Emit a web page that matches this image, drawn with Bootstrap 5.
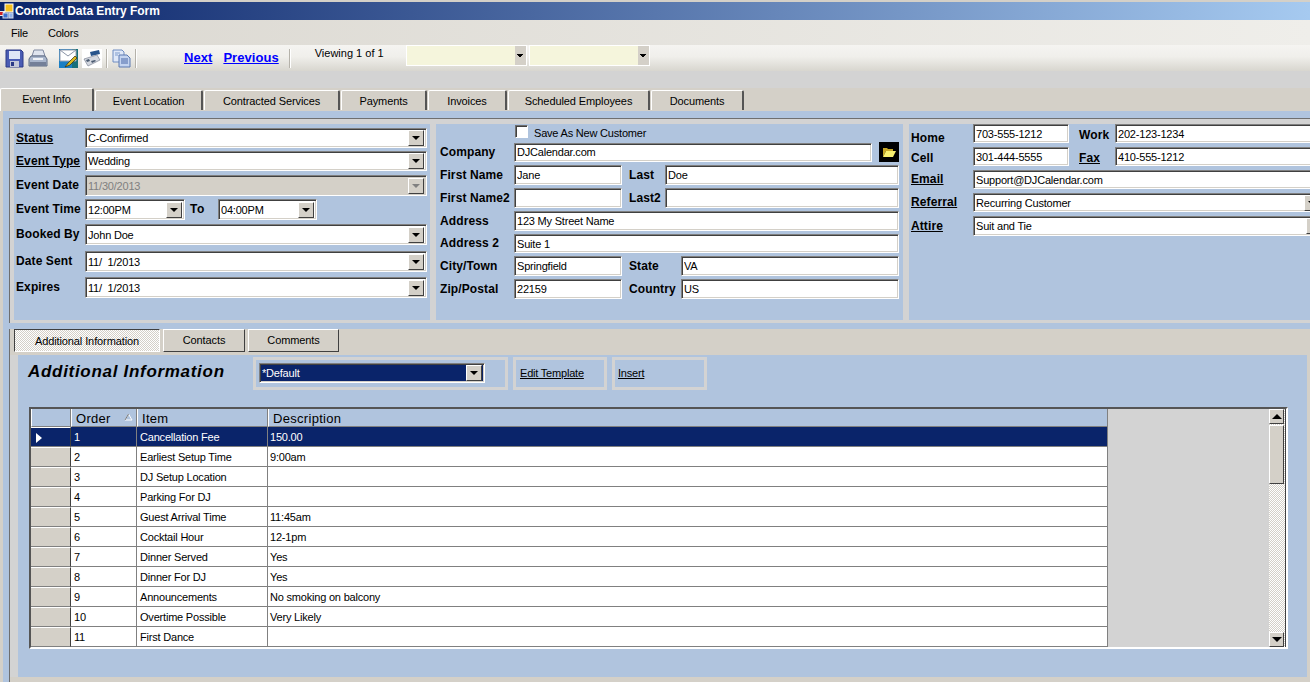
<!DOCTYPE html>
<html lang="en">
<head>
    <meta charset="UTF-8">
    <title>Contract Data Entry Form</title>
    <link href="https://cdn.jsdelivr.net/npm/bootstrap@5.3.0/dist/css/bootstrap.min.css" rel="stylesheet">
    <style>
        html, body { height: 682px; overflow: hidden; }
        body { width: 1310px; background: #d4d0c8; color: #000; font: 11px/13px "Liberation Sans", Arial, sans-serif; letter-spacing: -.2px; }

        /* window chrome */
        .titlebar { height: 20px; border-top: 2px solid #d4d0c8; background: linear-gradient(90deg, #0a246a, #a6caf0); color: #fff; font-weight: 700; font-size: 12px; letter-spacing: -.05px; }
        .menubar { height: 25px; background: linear-gradient(90deg, #dbd8d1, #efeeea); padding: 2px 0 0 11px; gap: 20px; }
        .menubar .nav-link { padding: 0; color: #000; font-size: 11px; }
        .toolbar { height: 26px; background: linear-gradient(180deg, #f5f4f1, #f0efeb 45%, #d8d6cf); padding-left: 5px; }
        .toolbar svg { flex-shrink: 0; }
        .tsep { width: 2px; height: 19px; border-left: 1px solid #b5b2aa; border-right: 1px solid #fff; flex-shrink: 0; }
        .toolbar a { color: #00f; font: 700 13px/15px "Liberation Sans", Arial, sans-serif; letter-spacing: .05px; margin-top: -1px; }
        .viewing { margin: -9px 24px 0 24px; width: 67px; white-space: nowrap; letter-spacing: 0; }
        .ml-4 { margin-left: 4px; } .ml-47 { margin-left: 47px; } .ml-10 { margin-left: 10px; } .ml-11 { margin-left: 11px; }
        .tb-combos { gap: 2px; }
        .tb-combo { width: 121px; height: 21px; background: #f5f5dc; border: 1px solid #fff; display: flex; justify-content: flex-end; }
        .tb-combo::after { content: ""; width: 11px; height: 19px; background: linear-gradient(#000, #000) center 8px / 6px 1px no-repeat, linear-gradient(#000, #000) center 9px / 4px 1px no-repeat, linear-gradient(#000, #000) center 10px / 2px 1px no-repeat, #d4d0c8; }
        .band { height: 17px; background: #d3d3d3; }

        /* top tabs */
        .tabs { height: 23px; background: #d4d0c8; flex-wrap: nowrap; }
        .tabs .nav-link { height: 20px; margin: 2px 1px 0 0; padding: 4px 0 0; text-align: center; color: #000; font-size: 11px; letter-spacing: -.1px; background: #d4d0c8; border: 0; border-top: 1px solid #fff; border-left: 1px solid #fff; border-right: 2px solid #555; border-radius: 2px 2px 0 0; }
        .tabs .nav-link.active { height: 23px; margin-top: 0; padding-top: 4px; width: 94px; }
        .tabs li:nth-child(2) .nav-link { width: 108px; }
        .tabs li:nth-child(3) .nav-link { width: 136px; }
        .tabs li:nth-child(4) .nav-link { width: 86px; }
        .tabs li:nth-child(5) .nav-link { width: 79px; }
        .tabs li:nth-child(6) .nav-link { width: 142px; }
        .tabs li:nth-child(7) .nav-link { width: 93px; }

        .tab-page { height: 571px; background: #b0c4de; border-left: 3px solid #d4d0c8; padding: 7px 0 0 6px; }
        .top-sec { background: #d3d3d3; border-top: 1px solid #6f6f6f; border-left: 1px solid #6f6f6f; padding: 5px 0 3px 4px; gap: 6px; }
        .pane { height: 196px; background: #b0c4de; flex-shrink: 0; overflow: hidden; }
        .pane-l { width: 416px; padding-left: 2px; }
        .pane-m { width: 467px; padding-left: 4px; }
        .pane-r { width: 401px; padding-left: 2px; }

        /* fields */
        .f-row { display: flex; align-items: center; flex-shrink: 0; }
        .t1 { margin-top: 1px; } .t2 { margin-top: 2px; } .t3 { margin-top: 3px; } .t4 { margin-top: 4px; } .t5 { margin-top: 5px; } .t6 { margin-top: 6px; }
        .lbl { font-weight: 700; font-size: 12px; letter-spacing: .1px; white-space: nowrap; flex-shrink: 0; margin: 0; }
        .pane-l .lbl { width: 69px; }
        .pane-m .lbl { width: 74px; }
        .pane-r .lbl { width: 62px; }
        .lbl.u { text-decoration: underline; }
        .lbl.low { margin-top: 5px; margin-bottom: -5px; }
        .lbl.low-2 { margin-top: 2px; margin-bottom: -2px; }
        .pane-m .lbl.s { width: 36px; margin-left: 7px; }
        .pane-m .lbl.w { width: 52px; margin-left: 7px; }
        .pane-r .lbl.s { width: 36px; margin-left: 10px; }
        .pane-l .lbl.to { width: 28px; margin-left: 5px; letter-spacing: .6px; }

        .sunk { height: 20px; background: #fff; border: 1px solid; border-color: #808080 #fff #fff #808080; box-shadow: inset 1px 1px #404040, inset -1px -1px #d4d0c8; flex-shrink: 0; }
        .sunk.h19 { height: 19px; }
        .sunk.h21 { height: 21px; }
        input.form-control.sunk { padding: 0 0 0 2px; border-radius: 0; font-size: 11px; letter-spacing: -.2px; color: #000; min-height: 0; }
        input.form-control.sunk:focus { outline: 0; }
        .combo { display: flex; padding: 2px 2px 2px 2px; align-items: center; }
        .combo input.form-control { border: 0; background: transparent; padding: 0; font-size: 11px; letter-spacing: -.2px; line-height: 13px; height: 15px; min-width: 0; flex: 1; border-radius: 0; color: #000; }
        .combo .btn { width: 16px; height: 16px; padding: 0; flex-shrink: 0; background: #d4d0c8; border: 1px solid; border-color: #fff #404040 #404040 #fff; border-radius: 0; display: flex; align-items: center; justify-content: center; }
        .combo .btn::after { content: ""; border-top: 4px solid #000; border-left: 4px solid transparent; border-right: 4px solid transparent; }
        .combo.off { background: #d4d0c8; }
        .combo.off input.form-control { color: #808080; }
        .combo.off .btn::after { border-top-color: #808080; }
        .w-342 { width: 342px; } .w-100p { width: 100px; } .w-99 { width: 99px; }
        .w-358 { width: 358px; } .w-108 { width: 108px; } .w-234 { width: 234px; } .w-385 { width: 385px; } .w-218 { width: 218px; }
        .w-96 { width: 96px; } .w-210 { width: 210px; } .w-352 { width: 352px; } .w-350 { width: 350px; }
        .check { margin-left: 74px; height: 13px; }
        .check span { padding-top: 3px; }
        .check .form-check-input { width: 13px; height: 13px; margin: 0 6px 0 1px; border-radius: 0; border: 1px solid; border-color: #6f6f6f #fff #fff #6f6f6f; background-color: #fff; box-shadow: inset 1px 1px #404040; float: none; }
        .folder { width: 20px; height: 20px; padding: 0; margin-left: 7px; background: #000; border: 0; border-radius: 0; display: flex; align-items: center; justify-content: center; flex-shrink: 0; }

        /* lower section */
        .gap-blue { height: 6px; }
        .lower { height: 353px; border-left: 1px solid #6f6f6f; background: #d4d0c8; padding-right: 3px; }
        .subtabs { height: 26px; padding-left: 4px; gap: 3px; }
        .subtabs .btn { height: 23px; padding: 0; font-size: 11px; line-height: 13px; letter-spacing: -.1px; color: #000; background: #d4d0c8; border: 1px solid; border-color: #fff #404040 #404040 #fff; border-radius: 0; }
        .subtabs .btn.on { background: repeating-conic-gradient(#d4d0c8 0 25%, #fff 0 50%) 0 0 / 2px 2px; border-color: #404040 #fff #fff #404040; width: 146px; padding-top: 2px; }
        .subtabs .b2 { width: 82px; }
        .subtabs .b3 { width: 91px; }
        .lower-gray { height: 322px; background: #d3d3d3; padding-left: 8px; }
        .lower-blue { height: 322px; background: #b0c4de; padding: 2px 0 0 11px; }
        .info-head { width: 220px; margin-left: -1px; font: italic 700 17px/20px "Liberation Sans", Arial, sans-serif; letter-spacing: .7px; padding-top: 5px; flex-shrink: 0; white-space: nowrap; }
        .head-row { height: 33px; gap: 5px; }
        .tool-box { height: 33px; border: 3px solid #d3d3d3; flex-shrink: 0; }
        .tool-box a { color: #000; font-size: 11px; }
        .box-1 { width: 255px; padding: 3px; }
        .box-2 { width: 94px; padding: 7px 0 0 4px; }
        .box-3 { width: 95px; padding: 7px 0 0 3px; }
        .combo.navy { width: 226px; height: 20px; background: #0a246a; }
        .combo.navy input.form-control { color: #fff; }

        /* data grid */
        .frame { width: 1259px; height: 242px; margin-top: 17px; border: 2px solid; border-color: #555 #fff #fff #555; background: #d3d3d3; }
        .grid.table { width: 1077px; margin: 0; table-layout: fixed; border-collapse: separate; border-spacing: 0; font-size: 11px; line-height: 13px; --bs-table-bg: #fff; }
        .grid.table > :not(caption) > * > * { padding: 1px 0 0 3px; height: 20px; border: 0; border-right: 1px solid #808080; border-bottom: 1px solid #808080; white-space: nowrap; color: #000; vertical-align: middle; }
        .grid.table > tbody > tr > td:nth-child(4) { padding-left: 2px; }
        .grid.table thead th { height: 18px; background: #b0c4de; font-weight: 400; font-size: 13px; letter-spacing: .3px; padding: 2px 0 0 4px; border-left: 1px solid #fff; position: relative; }
        .grid.table tbody th { background: #d4d0c8; border-top: 1px solid #fff; border-right: 1px solid #404040; border-bottom-color: #808080; }
        .grid.table tr.sel > td { background: #0a246a; color: #fff; }
        .grid.table tr.sel > th { background: #0a246a; padding-left: 5px; }
        .sel-mark { display: block; width: 0; border-left: 6px solid #fff; border-top: 5px solid transparent; border-bottom: 5px solid transparent; }
        .sort { position: absolute; right: 3px; top: 4px; }
        .c0 { width: 40px; } .c1 { width: 66px; } .c2 { width: 131px; } .c3 { width: 840px; }
        .scroll { width: 17px; flex-shrink: 0; padding-right: 1px; border-right: 1px solid #404040; background: repeating-conic-gradient(#d4d0c8 0 25%, #fff 0 50%) 0 0 / 2px 2px; }
        .sb { width: 15px; background: #d4d0c8; border: 1px solid; border-color: #fff #404040 #404040 #fff; flex-shrink: 0; padding: 0; border-radius: 0; }
        .sb.arrow { height: 15px; display: flex; align-items: center; justify-content: center; }
        .sb.up::after { content: ""; border-bottom: 5px solid #000; border-left: 5px solid transparent; border-right: 5px solid transparent; }
        .sb.down::after { content: ""; border-top: 5px solid #000; border-left: 5px solid transparent; border-right: 5px solid transparent; }
        .sb.thumb { height: 59px; margin-top: 1px; }
    </style>
</head>
<body>
    <div class="titlebar d-flex align-items-center">
        <svg width="15" height="16" viewBox="0 0 15 16"><rect x="0" y="8" width="5" height="5" fill="#e8e8e8"/><rect x="0" y="9" width="3" height="3" fill="#d02020"/><rect x="5" y="1" width="8" height="8" fill="#f4c020" stroke="#fff"/><rect x="3" y="10" width="5" height="5" fill="#3a6fd0" stroke="#cfd8ea"/><rect x="9" y="10" width="4" height="5" fill="#8fb0e8" stroke="#cfd8ea"/></svg>
        <span>Contract Data Entry Form</span>
    </div>

    <nav class="menubar nav align-items-center">
        <a class="nav-link" href="#">File</a>
        <a class="nav-link" href="#">Colors</a>
    </nav>

    <div class="toolbar d-flex align-items-center">
        <svg width="19" height="19" viewBox="0 0 19 19"><path d="M1 1h15l2 2v15H1z" fill="#4a5cb4" stroke="#2c3a86"/><rect x="4" y="2" width="11" height="8" fill="#dfe5f6"/><rect x="5" y="12" width="9" height="6" fill="#c4c8d8"/><rect x="6" y="13" width="3" height="4" fill="#2c3a86"/></svg>
        <svg class="ml-4" width="20" height="19" viewBox="0 0 20 19"><path d="M6 1h9l2 6H4z" fill="#dfe4ee" stroke="#7f89a0"/><path d="M3 7h14l2 3v7H1v-7z" fill="#a9b6cc" stroke="#5f6c84"/><rect x="2" y="13" width="16" height="4" fill="#748098"/><rect x="5" y="9" width="10" height="2" fill="#eef1f6"/></svg>
        <svg class="ml-11" width="19" height="19" viewBox="0 0 19 19"><rect width="19" height="19" fill="#1a7fc4"/><rect x="13" y="0" width="6" height="19" fill="#18707a"/><path d="M1 1h16v11H1z" fill="#fff" stroke="#98a0b0"/><path d="M1 1l8 6 8-6" fill="none" stroke="#8a93a6"/><path d="M6 18l3-4 7-7 2 2-7 7z" fill="#d8b820" stroke="#302a10" stroke-width=".7"/></svg>
        <svg class="ml-4" width="20" height="19" viewBox="0 0 20 19"><rect width="20" height="19" fill="#fff"/><path d="M8 3l9-2 1 4-9 2z" fill="#27548c"/><path d="M2 10l13-4 3 5-12 6z" fill="#d4d8e0" stroke="#7c8494" stroke-width=".7"/><path d="M4 11l3-1 1 2-3 1zM9 12l4-1 1 1-4 2z" fill="#4a5a70"/></svg>
        <div class="tsep ml-4"></div>
        <svg class="ml-4" width="19" height="19" viewBox="0 0 19 19"><path d="M1 1h9l2 2v10H1z" fill="#dfe8f8" stroke="#6f8cc0"/><path d="M7 6h8l3 3v9H7z" fill="#c4d4f0" stroke="#5a78b0"/><path d="M9 10h7M9 12h7M9 14h7" stroke="#4a68a8"/><path d="M3 4h5M3 6h3" stroke="#7f9ccc"/></svg>
        <div class="tsep ml-4"></div>
        <a href="#" class="ml-47">Next</a>
        <a href="#" class="ml-11">Previous</a>
        <div class="tsep ml-10"></div>
        <span class="viewing">Viewing 1 of 1</span>
        <div class="d-flex tb-combos align-self-start">
            <div class="tb-combo"></div>
            <div class="tb-combo"></div>
        </div>
    </div>
    <div class="band"></div>

    <ul class="nav tabs">
        <li><a class="nav-link active" href="#">Event Info</a></li>
        <li><a class="nav-link" href="#">Event Location</a></li>
        <li><a class="nav-link" href="#">Contracted Services</a></li>
        <li><a class="nav-link" href="#">Payments</a></li>
        <li><a class="nav-link" href="#">Invoices</a></li>
        <li><a class="nav-link" href="#">Scheduled Employees</a></li>
        <li><a class="nav-link" href="#">Documents</a></li>
    </ul>

    <div class="tab-page">
        <div class="top-sec d-flex">
            <div class="pane pane-l">
                <div class="f-row t4"><label class="lbl u">Status</label><div class="sunk combo w-342"><input class="form-control" value="C-Confirmed"><button class="btn" type="button"></button></div></div>
                <div class="f-row t3"><label class="lbl u">Event Type</label><div class="sunk combo w-342"><input class="form-control" value="Wedding"><button class="btn" type="button"></button></div></div>
                <div class="f-row t4"><label class="lbl">Event Date</label><div class="sunk h21 combo off w-342"><input class="form-control" value="11/30/2013"><button class="btn" type="button"></button></div></div>
                <div class="f-row t3"><label class="lbl">Event Time</label><div class="sunk h21 combo w-100p"><input class="form-control" value="12:00PM"><button class="btn" type="button"></button></div><label class="lbl to">To</label><div class="sunk h21 combo w-99"><input class="form-control" value="04:00PM"><button class="btn" type="button"></button></div></div>
                <div class="f-row t4"><label class="lbl">Booked By</label><div class="sunk h21 combo w-342"><input class="form-control" value="John Doe"><button class="btn" type="button"></button></div></div>
                <div class="f-row t6"><label class="lbl">Date Sent</label><div class="sunk h21 combo w-342"><input class="form-control" value="11/  1/2013"><button class="btn" type="button"></button></div></div>
                <div class="f-row t5"><label class="lbl">Expires</label><div class="sunk h21 combo w-342"><input class="form-control" value="11/  1/2013"><button class="btn" type="button"></button></div></div>
            </div>

            <div class="pane pane-m">
                <div class="f-row t1 check"><input class="form-check-input" type="checkbox"><span>Save As New Customer</span></div>
                <div class="f-row t4"><label class="lbl">Company</label><input class="form-control sunk h19 w-358" value="DJCalendar.com"><button class="btn folder" type="button"><svg width="14" height="12" viewBox="0 0 14 12"><path d="M1 2h4l1 1h5v2H4L1 11z" fill="#c8a828"/><path d="M4 5h10l-3 6H1z" fill="#f8f070"/></svg></button></div>
                <div class="f-row t3"><label class="lbl">First Name</label><input class="form-control sunk w-108" value="Jane"><label class="lbl s">Last</label><input class="form-control sunk w-234" value="Doe"></div>
                <div class="f-row t3"><label class="lbl">First Name2</label><input class="form-control sunk w-108"><label class="lbl s">Last2</label><input class="form-control sunk w-234"></div>
                <div class="f-row t3"><label class="lbl">Address</label><input class="form-control sunk w-385" value="123 My Street Name"></div>
                <div class="f-row t3"><label class="lbl">Address 2</label><input class="form-control sunk h19 w-385" value="Suite 1"></div>
                <div class="f-row t3"><label class="lbl">City/Town</label><input class="form-control sunk w-108" value="Springfield"><label class="lbl w">State</label><input class="form-control sunk w-218" value="VA"></div>
                <div class="f-row t3"><label class="lbl">Zip/Postal</label><input class="form-control sunk w-108" value="22159"><label class="lbl w">Country</label><input class="form-control sunk w-218" value="US"></div>
            </div>

            <div class="pane pane-r">
                <div class="f-row"><label class="lbl low">Home</label><input class="form-control sunk h19 w-96" value="703-555-1212"><label class="lbl s low-2">Work</label><input class="form-control sunk h19 w-210" value="202-123-1234"></div>
                <div class="f-row t4"><label class="lbl low-2">Cell</label><input class="form-control sunk h19 w-96" value="301-444-5555"><label class="lbl s u low-2">Fax</label><input class="form-control sunk h19 w-210" value="410-555-1212"></div>
                <div class="f-row t4"><label class="lbl u">Email</label><input class="form-control sunk h19 w-352" value="Support@DJCalendar.com"></div>
                <div class="f-row t4"><label class="lbl u">Referral</label><div class="sunk h19 combo w-350"><input class="form-control" value="Recurring Customer"><button class="btn" type="button"></button></div></div>
                <div class="f-row t4"><label class="lbl u">Attire</label><div class="sunk combo w-352"><input class="form-control" value="Suit and Tie"><button class="btn" type="button"></button></div></div>
            </div>
        </div>

        <div class="gap-blue"></div>

        <div class="lower">
            <div class="subtabs d-flex">
                <button class="btn on" type="button">Additional Information</button>
                <button class="btn b2" type="button">Contacts</button>
                <button class="btn b3" type="button">Comments</button>
            </div>
            <div class="lower-gray">
                <div class="lower-blue">
                    <div class="head-row d-flex">
                        <div class="info-head">Additional Information</div>
                        <div class="tool-box box-1"><div class="sunk combo navy"><input class="form-control" value="*Default"><button class="btn" type="button"></button></div></div>
                        <div class="tool-box box-2"><a href="#">Edit Template</a></div>
                        <div class="tool-box box-3"><a href="#">Insert</a></div>
                    </div>

                    <div class="frame d-flex justify-content-between">
                        <table class="table grid">
                            <colgroup><col class="c0"><col class="c1"><col class="c2"><col class="c3"></colgroup>
                            <thead>
                                <tr><th></th><th>Order<svg class="sort" width="9" height="8" viewBox="0 0 9 8"><path d="M4.5 1L8 7H1z" fill="none" stroke="#fff"/><path d="M4.5 1L1 7" fill="none" stroke="#777"/></svg></th><th>Item</th><th>Description</th></tr>
                            </thead>
                            <tbody>
                                <tr class="sel"><th><span class="sel-mark"></span></th><td>1</td><td>Cancellation Fee</td><td>150.00</td></tr>
                                <tr><th></th><td>2</td><td>Earliest Setup Time</td><td>9:00am</td></tr>
                                <tr><th></th><td>3</td><td>DJ Setup Location</td><td></td></tr>
                                <tr><th></th><td>4</td><td>Parking For DJ</td><td></td></tr>
                                <tr><th></th><td>5</td><td>Guest Arrival Time</td><td>11:45am</td></tr>
                                <tr><th></th><td>6</td><td>Cocktail Hour</td><td>12-1pm</td></tr>
                                <tr><th></th><td>7</td><td>Dinner Served</td><td>Yes</td></tr>
                                <tr><th></th><td>8</td><td>Dinner For DJ</td><td>Yes</td></tr>
                                <tr><th></th><td>9</td><td>Announcements</td><td>No smoking on balcony</td></tr>
                                <tr><th></th><td>10</td><td>Overtime Possible</td><td>Very Likely</td></tr>
                                <tr><th></th><td>11</td><td>First Dance</td><td></td></tr>
                            </tbody>
                        </table>
                        <div class="scroll d-flex flex-column justify-content-between">
                            <div><div class="sb arrow up"></div><div class="sb thumb"></div></div>
                            <div class="sb arrow down"></div>
                        </div>
                    </div>
                </div>
            </div>
        </div>
    </div>

    <script src="https://cdn.jsdelivr.net/npm/bootstrap@5.3.0/dist/js/bootstrap.bundle.min.js"></script>
</body>
</html>
